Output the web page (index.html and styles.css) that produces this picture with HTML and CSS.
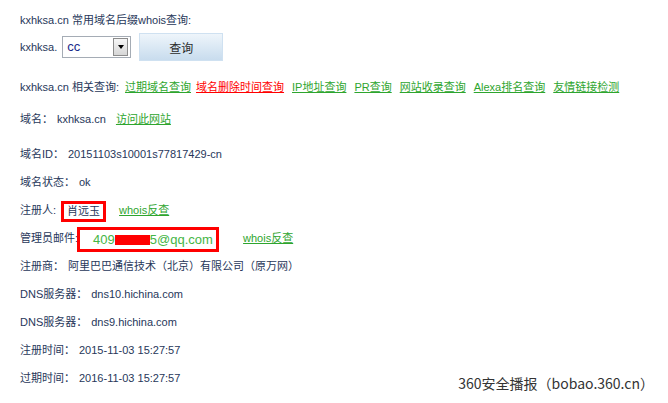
FILE: index.html
```html
<!DOCTYPE html>
<html lang="zh-CN">
<head>
    <meta charset="UTF-8">
    <title>kxhksa.cn whois查询</title>
    <link rel="stylesheet" href="styles.css">
</head>
<body>

    <div class="page">
        <div class="row head">kxhksa.cn 常用域名后缀whois查询:</div>

        <!-- suffix picker -->
        <div class="row pick">
            <span>kxhksa.</span>
            <div class="select">
                <span class="select-val">cc</span>
                <span class="select-btn"><i></i></span>
            </div>
            <button class="query">查询</button>
        </div>

        <div class="row links">kxhksa.cn 相关查询:<a href="#" class="first">过期域名查询</a><a href="#" class="hot">域名删除时间查询</a><a href="#">IP地址查询</a><a href="#">PR查询</a><a href="#">网站收录查询</a><a href="#">Alexa排名查询</a><a href="#">友情链接检测</a></div>

        <div class="row domain">域名：<span class="val">kxhksa.cn</span><a href="#">访问此网站</a></div>

        <!-- whois result -->
        <div class="info">
            <div class="row">域名ID：<span class="val">20151103s10001s77817429-cn</span></div>
            <div class="row">域名状态：<span class="val">ok</span></div>
            <div class="row">注册人:<span class="mark name">肖远玉</span><a href="#" class="rev">whois反查</a></div>
            <div class="row">管理员邮件:<span class="mark mail">409<span class="redact"></span>5@qq.com</span><a href="#" class="rev">whois反查</a></div>
            <div class="row">注册商：<span class="val">阿里巴巴通信技术（北京）有限公司（原万网）</span></div>
            <div class="row">DNS服务器：<span class="val">dns10.hichina.com</span></div>
            <div class="row">DNS服务器：<span class="val">dns9.hichina.com</span></div>
            <div class="row">注册时间：<span class="val">2015-11-03 15:27:57</span></div>
            <div class="row">过期时间：<span class="val">2016-11-03 15:27:57</span></div>
        </div>
    </div>

    <div class="stamp">360安全播报（bobao.360.cn）</div>

</body>
</html>
```

FILE: styles.css
```css
/* page */
body {
    font-family: "Liberation Sans", Arial, "Noto Sans CJK SC", sans-serif;
    font-size: 11px;
    color: #27375a;
    background-color: #fff;
    margin: 0;
    padding: 0;
}
.page {
    position: relative;
    padding: 5px 0 0 20px;
}
.row {
    height: 28px;
    line-height: 28px;
    white-space: nowrap;
}
.head {
    line-height: 31px;
}
a {
    color: #2ea52e;
    text-decoration: underline;
}
a.hot {
    color: #ff0000;
}
.val {
    margin-left: 4px;
}

/* suffix picker */
.pick {
    display: flex;
    align-items: center;
}
.select {
    display: flex;
    align-items: center;
    width: 67px;
    height: 20px;
    margin-left: 5px;
    border: 1px solid #a5acb5;
    background-color: #fff;
    line-height: 20px;
}
.select-val {
    flex: 1;
    padding-left: 4px;
    font-size: 13px;
    color: #1a2a8a;
}
.select-btn {
    display: flex;
    align-items: center;
    justify-content: center;
    width: 13px;
    height: 16px;
    margin-right: 2px;
    border: 1px solid #8c8c8c;
    background: linear-gradient(#f6f6f6, #d6d6d6);
}
.select-btn i {
    border-left: 3px solid transparent;
    border-right: 3px solid transparent;
    border-top: 4px solid #000;
}
.query {
    width: 84px;
    height: 28px;
    margin-left: 8px;
    border: 1px solid #cfe1f1;
    background: linear-gradient(#eef5fb, #c8dcee);
    font-family: "Noto Sans CJK SC", sans-serif;
    font-size: 12px;
    color: #2a2a2a;
    padding: 0;
}

/* related links */
.links {
    margin-top: 12px;
}
.links a {
    margin-left: 8px;
}
.links a.first {
    margin-left: 6px;
}
.links a.hot {
    margin-left: 5px;
}
.domain {
    margin-top: 4px;
}
.domain a {
    margin-left: 10px;
}

/* whois result */
.info {
    margin-top: 7px;
}
.mark {
    display: inline-block;
    border: 3px solid #ff0000;
    vertical-align: middle;
    box-sizing: border-box;
}
.name {
    height: 21px;
    line-height: 15px;
    margin-left: 5px;
    padding: 0 3px;
}
.name + .rev {
    margin-left: 13px;
}
.mail {
    height: 25px;
    line-height: 19px;
    width: 142px;
    margin-left: -1px;
    padding-left: 13px;
    font-size: 13px;
    color: #45b545;
}
.redact {
    display: inline-block;
    width: 35px;
    height: 10px;
    background-color: #ff0000;
    vertical-align: -1px;
}
.mail + .rev {
    margin-left: 24px;
}

.stamp {
    position: absolute;
    right: 14px;
    top: 373px;
    font-family: "Noto Sans CJK SC", sans-serif;
    font-size: 14px;
    color: #333;
}
```
